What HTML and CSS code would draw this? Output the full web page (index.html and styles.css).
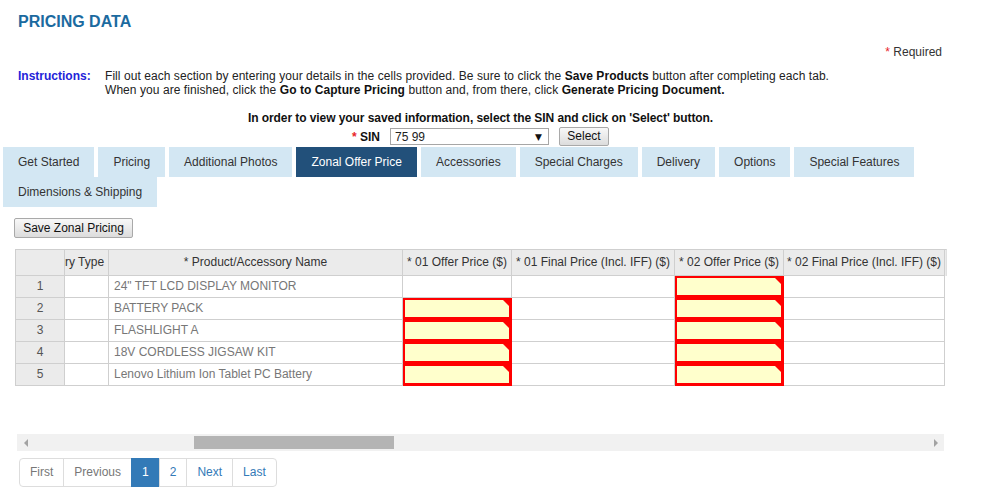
FILE: index.html
```html
<!DOCTYPE html>
<html>
<head>
<meta charset="utf-8">
<link rel="stylesheet" href="styles.css">
</head>
<body>
<div class="page">
  <h1 class="title">PRICING DATA</h1>
  <div class="required"><span class="star">*</span> Required</div>
  <div class="instructions">
    <div class="instr-label">Instructions:</div>
    <div class="instr-text">
      Fill out each section by entering your details in the cells provided. Be sure to click the <b>Save Products</b> button after completing each tab.<br>
      When you are finished, click the <b>Go to Capture Pricing</b> button and, from there, click <b>Generate Pricing Document.</b>
    </div>
  </div>
  <div class="view-note">In order to view your saved information, select the SIN and click on 'Select' button.</div>
  <div class="sin-row">
    <span class="sin-label"><span class="star">*</span> SIN</span>
    <div class="select"><span>75 99</span><span class="caret">▼</span></div>
    <button class="btn btn-select">Select</button>
  </div>
  <div class="tabs">
    <div class="tab">Get Started</div>
    <div class="tab">Pricing</div>
    <div class="tab">Additional Photos</div>
    <div class="tab active">Zonal Offer Price</div>
    <div class="tab">Accessories</div>
    <div class="tab">Special Charges</div>
    <div class="tab">Delivery</div>
    <div class="tab">Options</div>
    <div class="tab">Special Features</div>
    <div class="tab">Dimensions &amp; Shipping</div>
  </div>
  <button class="btn btn-save">Save Zonal Pricing</button>
  <div class="grid-wrap">
    <table class="grid">
      <colgroup>
        <col class="c-num"><col class="c-type"><col class="c-name"><col class="c-offer"><col class="c-final1"><col class="c-offer"><col class="c-final2">
      </colgroup>
      <thead>
        <tr>
          <th class="rownum"></th>
          <th class="clip">ry Type</th>
          <th>* Product/Accessory Name</th>
          <th>* 01 Offer Price ($)</th>
          <th>* 01 Final Price (Incl. IFF) ($)</th>
          <th>* 02 Offer Price ($)</th>
          <th>* 02 Final Price (Incl. IFF) ($)</th>
        </tr>
      </thead>
      <tbody>
        <tr><td class="rownum">1</td><td></td><td class="name">24" TFT LCD DISPLAY MONITOR</td><td></td><td></td><td class="err"></td><td></td></tr>
        <tr><td class="rownum">2</td><td></td><td class="name">BATTERY PACK</td><td class="err"></td><td></td><td class="err"></td><td></td></tr>
        <tr><td class="rownum">3</td><td></td><td class="name">FLASHLIGHT A</td><td class="err"></td><td></td><td class="err"></td><td></td></tr>
        <tr><td class="rownum">4</td><td></td><td class="name">18V CORDLESS JIGSAW KIT</td><td class="err"></td><td></td><td class="err"></td><td></td></tr>
        <tr><td class="rownum">5</td><td></td><td class="name">Lenovo Lithium Ion Tablet PC Battery</td><td class="err"></td><td></td><td class="err"></td><td></td></tr>
      </tbody>
    </table>
    <div class="head-filler"></div>
  </div>
  <div class="hscroll">
    <div class="arrow-btn"><span class="arrow-left"></span></div>
    <div class="track"><div class="thumb"></div></div>
    <div class="arrow-btn"><span class="arrow-right"></span></div>
  </div>
  <ul class="pager">
    <li class="disabled">First</li>
    <li class="disabled">Previous</li>
    <li class="current">1</li>
    <li>2</li>
    <li>Next</li>
    <li>Last</li>
  </ul>
</div>
</body>
</html>
```
FILE: styles.css
```css
* { box-sizing: border-box; }
body {
  margin: 0;
  font-family: "Liberation Sans", Arial, sans-serif;
  font-size: 12px;
  color: #222;
  background: #fff;
}
.page { width: 961px; }
.title {
  margin: 0;
  padding: 12px 0 0 18px;
  font-size: 16px;
  line-height: 20px;
  font-weight: bold;
  color: #1b6a9f;
}
.required {
  margin-top: 13px;
  text-align: right;
  padding-right: 19px;
  line-height: 14px;
  color: #333;
}
.star { color: #e8242a; }
.instructions {
  display: flex;
  margin-top: 10px;
  padding-left: 18px;
  line-height: 14px;
}
.instr-label {
  width: 87px;
  flex: none;
  color: #2323d9;
  font-weight: bold;
}
.instr-text { color: #222; letter-spacing: 0.06px; }
.instr-text b { color: #111; }
.view-note {
  margin-top: 14px;
  text-align: center;
  font-weight: bold;
  line-height: 14px;
  color: #111;
  letter-spacing: -0.07px;
}
.sin-row {
  display: flex;
  justify-content: center;
  align-items: center;
  margin-top: 1px;
  height: 21px;
}
.sin-label {
  font-weight: bold;
  color: #111;
  margin-right: 10px;
}
.select {
  width: 159px;
  height: 17px;
  border: 1px solid #a6a6a6;
  display: flex;
  justify-content: space-between;
  align-items: center;
  padding: 0 6px 0 4px;
  color: #222;
  margin-right: 10px;
}
.caret {
  font-family: "DejaVu Sans", sans-serif;
  font-size: 9px;
  color: #111;
}
.btn {
  font-family: "Liberation Sans", Arial, sans-serif;
  font-size: 12px;
  color: #111;
  background: linear-gradient(#f8f8f8, #dcdcdc);
  border: 1px solid #a9a9a9;
  border-radius: 2px;
  padding: 0 6px;
  height: 19px;
  line-height: 17px;
}
.btn-select { width: 50px; padding: 0; }
.tabs {
  display: flex;
  flex-wrap: wrap;
  column-gap: 4px;
  padding-left: 3px;
  width: 930px;
}
.tab {
  background: #d3e7f3;
  color: #333;
  padding: 0 15px;
  height: 30px;
  line-height: 30px;
}
.tab.active {
  background: #22507a;
  color: #fff;
}
.btn-save {
  display: block;
  margin: 11px 0 0 14px;
  width: 119px;
  height: 20px;
  padding: 0;
}
.grid-wrap {
  display: flex;
  align-items: flex-start;
  margin: 11px 0 0 15px;
}
.grid {
  border-collapse: separate;
  border-spacing: 0;
  table-layout: fixed;
  width: 929px;
  border-top: 1px solid #cfcfcf;
  border-left: 1px solid #cfcfcf;
}
.head-filler {
  width: 2px;
  height: 27px;
  background: #ebebeb;
  border-top: 1px solid #cfcfcf;
  border-right: 1px solid #e0e0e0;
}
.c-num { width: 49px; }
.c-type { width: 44px; }
.c-name { width: 294px; }
.c-offer { width: 109px; }
.c-final1 { width: 163px; }
.c-final2 { width: 161px; }
.grid th {
  background: #ebebeb;
  font-weight: normal;
  color: #333;
  line-height: 25px;
  padding: 0 2px;
  border-right: 1px solid #cfcfcf;
  border-bottom: 1px solid #cfcfcf;
  white-space: nowrap;
  overflow: hidden;
  text-align: center;
}
.grid th.clip { text-align: left; padding: 0; }
.grid td {
  line-height: 21px;
  height: 22px;
  padding: 0 5px;
  border-right: 1px solid #cfcfcf;
  border-bottom: 1px solid #cfcfcf;
  color: #777;
  white-space: nowrap;
  overflow: hidden;
  position: relative;
}
.grid td.rownum {
  background: #ebebeb;
  text-align: center;
  color: #555;
}
.grid td.err {
  background: #ffffcc;
  box-shadow: inset 0 0 0 2px #ff0000;
  border-right-color: #ff0000;
  border-bottom-color: #ff0000;
}
.grid td.err::after {
  content: "";
  position: absolute;
  top: 2px;
  right: 2px;
  width: 0;
  height: 0;
  border-top: 6px solid #ff0000;
  border-left: 6px solid transparent;
}
.hscroll {
  display: flex;
  margin: 48px 0 0 17px;
  width: 927px;
  height: 17px;
  background: #f1f1f1;
}
.arrow-btn {
  width: 17px;
  flex: none;
  display: flex;
  align-items: center;
  justify-content: center;
}
.arrow-left {
  width: 0; height: 0;
  border-top: 4px solid transparent;
  border-bottom: 4px solid transparent;
  border-right: 4px solid #a3a3a3;
}
.arrow-right {
  width: 0; height: 0;
  border-top: 4px solid transparent;
  border-bottom: 4px solid transparent;
  border-left: 4px solid #a3a3a3;
}
.track {
  flex: 1;
  padding: 2px 0 0 160px;
}
.thumb {
  width: 200px;
  height: 13px;
  background: #b4b4b4;
}
.pager {
  list-style: none;
  margin: 7px 0 0 19px;
  padding: 0;
  display: flex;
}
.pager li {
  padding: 0 10px;
  height: 29px;
  line-height: 27px;
  border: 1px solid #ddd;
  margin-left: -1px;
  color: #337ab7;
  background: #fff;
}
.pager li:first-child {
  margin-left: 0;
  border-radius: 4px 0 0 4px;
}
.pager li:last-child { border-radius: 0 4px 4px 0; }
.pager li.disabled { color: #777; }
.pager li.current {
  background: #337ab7;
  border-color: #337ab7;
  color: #fff;
}
```
